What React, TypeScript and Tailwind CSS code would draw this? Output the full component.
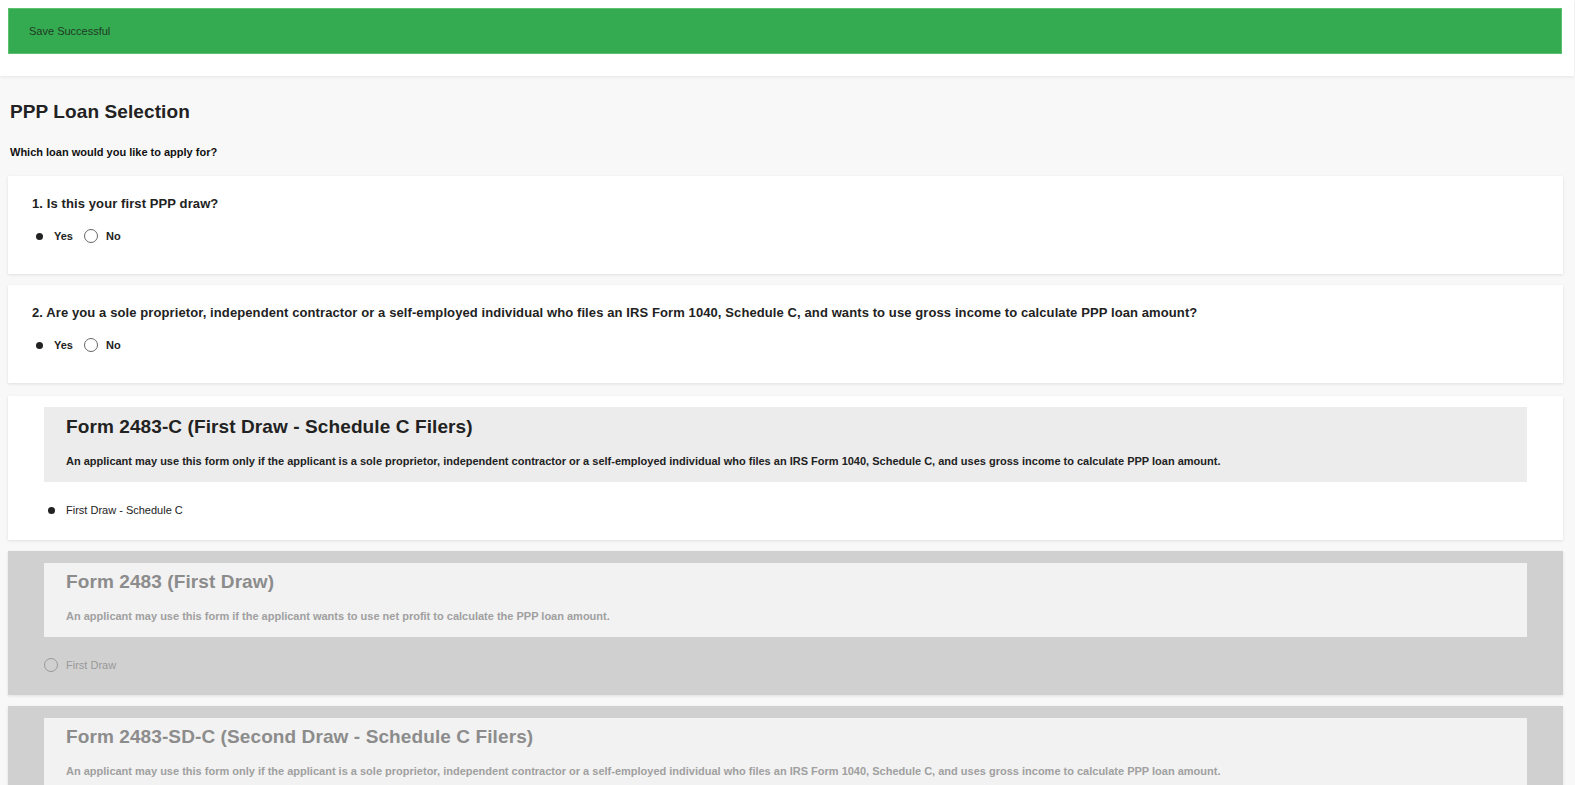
import React from 'react';

const longDesc =
  'An applicant may use this form only if the applicant is a sole proprietor, independent contractor or a self-employed individual who files an IRS Form 1040, Schedule C, and uses gross income to calculate PPP loan amount.';

const questions = [
  { num: '1', text: 'Is this your first PPP draw?' },
  {
    num: '2',
    text: 'Are you a sole proprietor, independent contractor or a self-employed individual who files an IRS Form 1040, Schedule C, and wants to use gross income to calculate PPP loan amount?',
  },
];

const forms = [
  { title: 'Form 2483-C (First Draw - Schedule C Filers)', desc: longDesc, option: 'First Draw - Schedule C', active: true },
  {
    title: 'Form 2483 (First Draw)',
    desc: 'An applicant may use this form if the applicant wants to use net profit to calculate the PPP loan amount.',
    option: 'First Draw',
    active: false,
  },
  { title: 'Form 2483-SD-C (Second Draw - Schedule C Filers)', desc: longDesc, option: 'Second Draw - Schedule C', active: false },
];

function Radio({ checked, disabled }: { checked: boolean; disabled?: boolean }) {
  return (
    <span className="flex h-[14px] w-[14px] shrink-0 items-center justify-center">
      {checked ? (
        <span className="h-[7px] w-[7px] rounded-full bg-[#222]" />
      ) : (
        <span
          className={
            disabled
              ? 'h-[14px] w-[14px] rounded-full border border-[#999]'
              : 'h-[14px] w-[14px] rounded-full border-[1.5px] border-[#666]'
          }
        />
      )}
    </span>
  );
}

export default function App() {
  return (
    <div className="min-h-screen bg-[#f8f8f8] font-['Liberation_Sans',Arial,sans-serif] text-[#222]">
      <div className="mr-[1px] bg-white pb-[22px] pl-2 pr-[12px] pt-2 shadow-[0_1px_3px_rgba(0,0,0,0.08)]">
        <div className="flex h-[46px] items-center border border-[#5cc070] bg-[#35ab51] pl-5 text-[11px] text-[#1f3a25]">
          Save Successful
        </div>
      </div>

      <div className="pl-2 pr-[12px]">
        <h1 className="mt-[25px] pl-[2px] text-[19px] font-bold leading-[22px] tracking-[0.1px] text-[#222]">
          PPP Loan Selection
        </h1>
        <p className="mt-[22px] pl-[2px] text-[11px] font-bold leading-[14px] text-[#111]">
          Which loan would you like to apply for?
        </p>

        <div className="mt-[17px] flex flex-col gap-[11px] pb-6">
          {questions.map((q) => (
            <div key={q.num} className="h-[98px] bg-white px-6 pt-[20px] shadow-[0_1px_3px_rgba(0,0,0,0.1)]">
              <p className="text-[13px] font-bold leading-4 tracking-[0.1px] text-[#222]">
                {q.num}. {q.text}
              </p>
              <div className="mt-[16px] flex items-center text-[11px] font-bold text-[#222]">
                <Radio checked />
                <span className="ml-2">Yes</span>
                <span className="ml-[11px]">
                  <Radio checked={false} />
                </span>
                <span className="ml-2">No</span>
              </div>
            </div>
          ))}

          <div className="mt-[2px] flex flex-col gap-[11px]">
            {forms.map((f) => (
              <div
                key={f.title}
                className={
                  f.active
                    ? 'h-[144px] bg-white px-9 pt-[11px] shadow-[0_1px_3px_rgba(0,0,0,0.1)]'
                    : 'h-[144px] bg-[#d0d0d0] px-9 pt-[12px] shadow-[0_1px_3px_rgba(0,0,0,0.1)]'
                }
              >
                <div
                  className={
                    f.active ? 'h-[75px] bg-[#ececec] px-[22px] pt-[9px]' : 'h-[74px] bg-[#f2f2f2] px-[22px] pt-[8px]'
                  }
                >
                  <h2
                    className={
                      f.active
                        ? 'text-[19px] font-bold leading-[22px] tracking-[0.1px] text-[#222]'
                        : 'text-[19px] font-bold leading-[22px] tracking-[0.1px] text-[#8c8c8c]'
                    }
                  >
                    {f.title}
                  </h2>
                  <p
                    className={
                      f.active
                        ? 'mt-[16px] text-[11px] font-bold leading-[14px] text-[#222]'
                        : 'mt-[16px] text-[11px] font-bold leading-[14px] text-[#a0a0a0]'
                    }
                  >
                    {f.desc}
                  </p>
                </div>
                <div className="mt-[20px] flex items-center">
                  <Radio checked={f.active} disabled={!f.active} />
                  <span className={f.active ? 'ml-2 text-[11px] text-[#222]' : 'ml-2 text-[11px] text-[#999]'}>
                    {f.option}
                  </span>
                </div>
              </div>
            ))}
          </div>
        </div>
      </div>
    </div>
  );
}
